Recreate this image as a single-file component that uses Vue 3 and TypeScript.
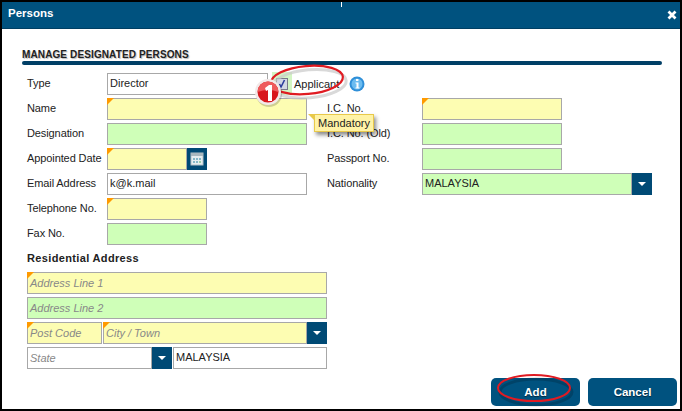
<script setup lang="ts">
const tick = 'tick'
</script>

<template>
  <div class="window">
    <header class="head">
      <span class="title">Persons</span>
      <svg class="close" viewBox="0 0 10 10" width="10" height="10"><path d="M1.500 1.500l7 7M8.500 1.500l-7 7" stroke="#fff" stroke-width="2.800" /></svg>
    </header>
    <i :class="tick"></i>
    <main class="body">
      <h2 class="section">MANAGE DESIGNATED PERSONS</h2>
      <div class="rule"></div>
      <div class="grid">
        <label>Type</label>
        <div class="typerow">
          <div class="f white typef">Director</div>
          <div class="checkwrap">
            <svg viewBox="0 0 12 12" width="12" height="12"><rect x=".5" y=".5" width="11" height="11" fill="#d3d7e4" stroke="#77778a" /><path d="M3.500 6l1.500 3 3.500-7" fill="none" stroke="#2b3c9c" stroke-width="1.600" /></svg>
          </div>
          <span class="applicant">Applicant</span>
          <svg class="info" viewBox="0 0 16 16" width="16" height="16"><circle cx="8" cy="8" r="7.500" fill="#2f8fd8" /><circle cx="8" cy="8" r="5.500" fill="#6cbcf0" /><rect x="7" y="3" width="2.400" height="2" fill="#fff" /><path d="M6.500 6.500h3v5h1v1h-4v-1h1v-4h-1z" fill="#fff" /></svg>
        </div>
        <span class="spacer"></span><span class="spacer"></span>

        <label>Name</label><div class="f y m"></div>
        <label class="rl">I.C. No.</label><div class="f y m w140"></div>

        <label>Designation</label><div class="f g"></div>
        <label class="rl">I.C. No. (Old)</label><div class="f g w140"></div>

        <label>Appointed Date</label>
        <div class="combo w100"><div class="f y m grow"></div><button class="sq"><svg viewBox="0 0 14 14" width="14" height="14"><rect x="1" y="1" width="12" height="12" fill="#e6eef0" stroke="#b4c2c8" /><rect x="1" y="1" width="12" height="3" fill="#a9b8bf" /><path d="M3 6h2v2H3zM6 6h2v2H6zM9 6h2v2H9zM3 9h2v2H3zM6 9h2v2H6z" fill="#86b8c8" /><path d="M9 9h2v2H9z" fill="#9bd0a6" /></svg></button></div>
        <label class="rl">Passport No.</label><div class="f g w140"></div>

        <label>Email Address</label><div class="f white">k@k.mail</div>
        <label class="rl">Nationality</label>
        <div class="combo"><div class="f g grow upper">MALAYSIA</div><button class="sq"><i class="caret"></i></button></div>

        <label>Telephone No.</label><div class="f y m w100"></div>
        <span class="spacer"></span><span class="spacer"></span>

        <label>Fax No.</label><div class="f g w100"></div>
        <span class="spacer"></span><span class="spacer"></span>
      </div>

      <h3 class="sub">Residential Address</h3>
      <div class="addr">
        <div class="f y m ph">Address Line 1</div>
        <div class="f g ph">Address Line 2</div>
        <div class="line">
          <div class="f y m ph post">Post Code</div>
          <div class="combo grow"><div class="f y m ph grow">City / Town</div><button class="sq"><i class="caret"></i></button></div>
        </div>
        <div class="line">
          <div class="combo state"><div class="f white ph grow">State</div><button class="sq"><i class="caret"></i></button></div>
          <div class="f white grow">MALAYSIA</div>
        </div>
      </div>

      <footer class="foot">
        <button class="btn">Add</button>
        <button class="btn">Cancel</button>
      </footer>

      <!-- Callouts drawn over the form -->
      <svg class="ring ring1" viewBox="0 0 82 40" width="82" height="40"><g transform="rotate(-5 40 19)"><ellipse cx="42" cy="23" rx="37" ry="14" fill="none" stroke="#c9c9c9" stroke-width="3" opacity=".7" /><ellipse cx="40" cy="19" rx="36" ry="14" fill="none" stroke="#e01b22" stroke-width="2.200" /></g></svg>
      <svg class="badge" viewBox="0 0 30 30" width="30" height="30"><circle cx="15" cy="16" r="13" fill="#000" opacity=".18" /><circle cx="14" cy="14" r="13" fill="#f2e9e9" /><circle cx="14" cy="14" r="10.500" fill="#d8161c" /><path d="M3.500 14a10.500 10.500 0 0 1 21 0q-10-4-21 0z" fill="#ee5a5c" /><path d="M11 10l4-3h3v16h-4V12l-2 1z" fill="#fff" /></svg>
      <div class="tip">Mandatory</div>
      <svg class="ring ring2" viewBox="0 0 80 36" width="80" height="36"><ellipse cx="41" cy="20" rx="36" ry="13" fill="none" stroke="#000" stroke-width="3" opacity=".18" /><ellipse cx="39" cy="16" rx="36" ry="13" fill="none" stroke="#e01b22" stroke-width="2" /></svg>
    </main>
  </div>
</template>

<style scoped>
.window {
  width: 682px;
  height: 411px;
  box-sizing: border-box;
  border: 2px solid #000;
  background: #fff;
  position: relative;
  overflow: hidden;
  font-family: "Liberation Sans", Arial, sans-serif;
  font-size: 11px;
  color: #222;
  display: flex;
  flex-direction: column;
}
.head {
  height: 27px;
  flex: none;
  background: #00527f;
  border-bottom: 1px solid #003f63;
  box-sizing: border-box;
  display: flex;
  align-items: center;
  justify-content: space-between;
  padding: 0 3px 4px 6px;
  color: #fff;
}
.title { font-weight: 700; font-size: 11.500px; }
.close { margin-top: 3px; }
.tick {
  position: absolute;
  left: 339px;
  top: -2px;
  width: 1px;
  height: 7px;
  background: #fff;
}
.body {
  position: relative;
  flex: 1;
  padding: 20px 18px 0 20px;
}
.section {
  margin: 0;
  font-size: 10px;
  font-weight: 700;
  line-height: 11px;
  letter-spacing: .12px;
  color: #222;
  text-shadow: 1px 1px 1px #b8b8b8;
}
.rule {
  height: 4px;
  border-radius: 2px;
  background: #003f66;
  margin: 1px 0 7px;
}
.grid {
  margin-left: 5px;
  display: grid;
  grid-template-columns: 80px 200px 115px 230px;
  grid-auto-rows: 23px;
  row-gap: 2px;
  align-items: center;
}
.grid > label { line-height: 23px; white-space: nowrap; letter-spacing: -.1px; }
.grid > .rl { margin-left: 20px; }
.spacer { display: block; }
.f {
  box-sizing: border-box;
  height: 22px;
  width: 100%;
  border: 1px solid #a8a8a8;
  padding: 0 2px;
  line-height: 19px;
  position: relative;
  white-space: nowrap;
}
.white { background: #fff; }
.y { background: #fdfdb2; }
.g { background: #cfffb8; }
.m::before {
  content: "";
  position: absolute;
  left: -1px;
  top: -1px;
  border-style: solid;
  border-width: 7px 7px 0 0;
  border-color: #ff9a00 transparent transparent transparent;
}
.combo { display: flex; height: 22px; width: 100%; }
.w100, .combo.w100 { width: 100px; }
.w140 { width: 140px; }
.typerow { display: flex; align-items: center; width: 300px; }
.typef { width: 161px; flex: none; }
.checkwrap {
  width: 20px;
  height: 23px;
  margin-left: 4px;
  background: #d3f5c3;
  display: flex;
  align-items: center;
  justify-content: center;
  flex: none;
}
.applicant { margin-left: 2px; }
.info { margin-left: 10px; flex: none; }
.grow { flex: 1; min-width: 0; }
.sq {
  flex: none;
  width: 20px;
  height: 22px;
  border: 0;
  padding: 0;
  background: #004a75;
  display: flex;
  align-items: center;
  justify-content: center;
}
.caret {
  display: block;
  border-style: solid;
  border-width: 4px 4px 0 4px;
  border-color: #fff transparent transparent transparent;
}
.sub {
  margin: 6px 0 7px 5px;
  font-size: 11px;
  font-weight: 700;
  line-height: 14px;
  letter-spacing: .35px;
  color: #222;
}
.addr {
  margin-left: 5px;
  width: 300px;
  display: flex;
  flex-direction: column;
  gap: 3px;
}
.line { display: flex; gap: 1px; }
.ph { color: #888; font-style: italic; line-height: 21px; }
.post { width: 75px; flex: none; }
.state { width: 145px; flex: none; }
.foot {
  position: absolute;
  right: 3px;
  bottom: 3px;
  display: flex;
  gap: 8px;
}
.btn {
  width: 89px;
  height: 28px;
  border: 0;
  border-radius: 5px;
  background: #00527f;
  color: #fff;
  font: 700 11.500px "Liberation Sans", Arial, sans-serif;
  text-shadow: 0 1px 1px #00263d;
}
.ring { position: absolute; pointer-events: none; }
.ring1 { left: 265px; top: 32px; }
.ring2 { left: 493px; top: 343px; }
.badge { position: absolute; left: 252px; top: 49px; }
.tip {
  position: absolute;
  left: 312px;
  top: 85px;
  background: #fff3a6;
  border: 1px solid #e8c94a;
  padding: 0 3px;
  height: 16px;
  line-height: 16px;
  font-size: 11px;
  color: #222;
  box-shadow: 2px 3px 4px rgba(0, 0, 0, .45);
}
.tip::before {
  content: "";
  position: absolute;
  left: -7px;
  top: -1px;
  border-style: solid;
  border-width: 7px 7px 0 0;
  border-color: #e8c94a transparent transparent transparent;
  transform: scaleX(-1);
}
</style>

<style>
html, body { margin: 0; padding: 0; background: #000; }
</style>
